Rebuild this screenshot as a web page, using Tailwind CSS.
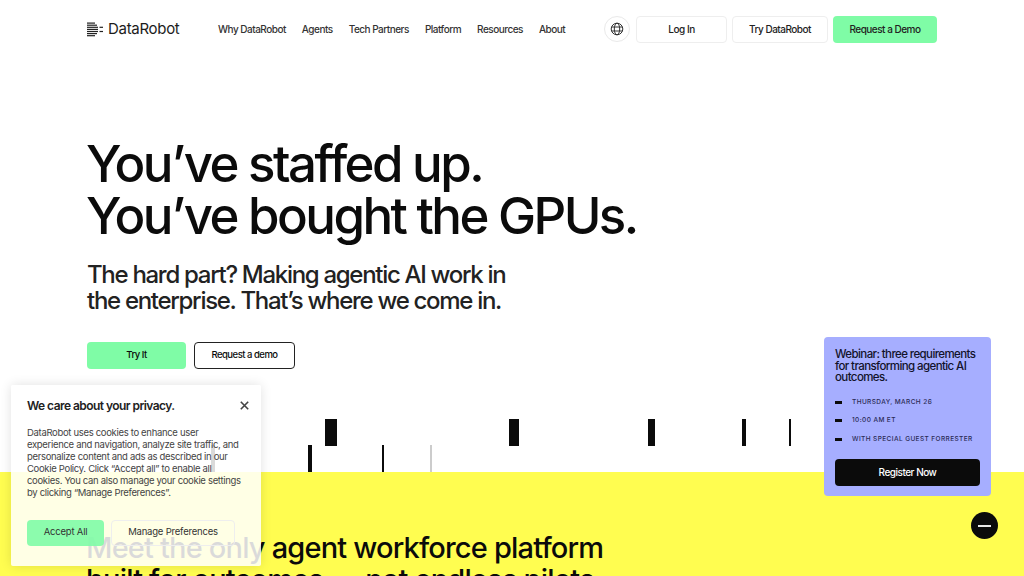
<!DOCTYPE html>
<html lang="en">
<head>
    <meta charset="UTF-8">
    <title>DataRobot</title>
    <script src="https://cdn.jsdelivr.net/npm/@tailwindcss/browser@4"></script>
</head>
<body class="bg-white text-[#0b0b0b] font-['Inter',sans-serif] h-[576px] w-[1024px] overflow-hidden relative">

    <!-- Header -->
    <header class="h-[58px] pl-[87px] flex items-center">
        <a class="flex items-center gap-[5px] w-[131px] shrink-0">
            <svg width="16" height="15" viewBox="0 0 16 15" fill="#222">
                <rect x="0" y="0.5" width="8" height="1.2"/>
                <rect x="0" y="2.6" width="10" height="1.2"/>
                <rect x="0" y="4.7" width="11" height="1.2"/>
                <rect x="0" y="6.8" width="11" height="1.2"/>
                <rect x="0" y="8.9" width="11" height="1.2"/>
                <rect x="0" y="11" width="10" height="1.2"/>
                <rect x="0" y="13.1" width="8" height="1.2"/>
                <rect x="12.5" y="4.7" width="3.5" height="1.2"/>
                <rect x="12.5" y="8.9" width="3.5" height="1.2"/>
            </svg>
            <span class="text-[15px] tracking-[-0.3px] text-[#1c1c1c]">DataRobot</span>
        </a>
        <nav class="flex items-center gap-4 text-[10px] font-medium tracking-[-0.5px] text-[#333] w-[386px] shrink-0">
            <a>Why DataRobot</a>
            <a>Agents</a>
            <a>Tech Partners</a>
            <a>Platform</a>
            <a>Resources</a>
            <a>About</a>
        </nav>
        <div class="flex items-center gap-[5px] text-[10px] font-medium tracking-[-0.5px] text-[#222]">
            <button class="w-[26px] h-[26px] mr-[1px] rounded-full border border-[#e9e9e9] flex items-center justify-center">
                <svg width="14" height="14" viewBox="0 0 14 14" fill="none" stroke="#333" stroke-width="1">
                    <circle cx="7" cy="7" r="5.8"/>
                    <ellipse cx="7" cy="7" rx="2.7" ry="5.8"/>
                    <path d="M1.6 5H12.4M1.6 9H12.4"/>
                </svg>
            </button>
            <button class="w-[91px] h-[27px] rounded-[4px] border border-[#eeeeee]">Log In</button>
            <button class="w-[96px] h-[27px] rounded-[4px] border border-[#eeeeee]">Try DataRobot</button>
            <button class="w-[104px] h-[27px] rounded-[4px] bg-[#7ffca6]">Request a Demo</button>
        </div>
    </header>

    <!-- Hero -->
    <section class="pl-[87px] pt-[80px] h-[414px]">
        <h1 class="text-[51px] leading-[52px] font-medium tracking-[-2.55px] -ml-[1px]">You’ve staffed up.<br>You’ve bought the GPUs.</h1>
        <p class="mt-[20px] text-[24px] leading-[26px] font-medium tracking-[-1.3px] text-[#222]">The hard part? Making agentic AI work in<br>the enterprise. That’s where we come in.</p>
        <div class="mt-[28px] flex gap-2 text-[9.5px] font-medium tracking-[-0.5px]">
            <button class="w-[99px] h-[27px] rounded-[4px] bg-[#7ffca6]">Try It</button>
            <button class="w-[101px] h-[27px] rounded-[4px] border border-[#222]">Request a demo</button>
        </div>
    </section>

    <!-- Yellow section -->
    <section class="bg-[#fffd50] h-[104px] pl-[87px] pt-[60px] overflow-hidden">
        <h2 class="text-[29px] leading-[32px] font-medium tracking-[-0.82px] -ml-[1px]">Meet the only agent workforce platform<br>built for outcomes — not endless pilots.</h2>
    </section>

    <!-- Barcode bars -->
    <div class="absolute left-[325px] top-[419px] w-[12px] h-[27px] bg-[#0b0b0b]"></div>
    <div class="absolute left-[509px] top-[419px] w-[10px] h-[27px] bg-[#0b0b0b]"></div>
    <div class="absolute left-[648px] top-[419px] w-[7px] h-[27px] bg-[#0b0b0b]"></div>
    <div class="absolute left-[742px] top-[419px] w-[4px] h-[27px] bg-[#0b0b0b]"></div>
    <div class="absolute left-[789px] top-[419px] w-[2px] h-[27px] bg-[#0b0b0b]"></div>
    <div class="absolute left-[308px] top-[445px] w-[4px] h-[27px] bg-[#0b0b0b]"></div>
    <div class="absolute left-[382px] top-[445px] w-[2px] h-[27px] bg-[#0b0b0b]"></div>
    <div class="absolute left-[430px] top-[445px] w-[2px] h-[27px] bg-[#cccccc]"></div>
    <div class="absolute left-[211px] top-[445px] w-[4px] h-[27px] bg-[#0b0b0b]"></div>

    <!-- Webinar card -->
    <aside class="absolute left-[824px] top-[337px] w-[167px] h-[159px] rounded-[4px] bg-[#a6aeff] px-[11px] pt-[12px]">
        <p class="text-[11.5px] leading-[11.5px] font-medium tracking-[-0.6px] text-[#12122a]">Webinar: three requirements for transforming agentic AI outcomes.</p>
        <ul class="mt-[14px] flex flex-col gap-[9.5px] text-[6.5px] leading-[9px] font-medium tracking-[0.4px] text-[#2a2a55]">
            <li class="flex items-center gap-[10px]"><span class="w-[7px] h-[3px] bg-[#0b0b0b]"></span>THURSDAY, MARCH 26</li>
            <li class="flex items-center gap-[10px]"><span class="w-[7px] h-[3px] bg-[#0b0b0b]"></span>10:00 AM ET</li>
            <li class="flex items-center gap-[10px]"><span class="w-[7px] h-[3px] bg-[#0b0b0b]"></span>WITH SPECIAL GUEST FORRESTER</li>
        </ul>
        <button class="mt-[15px] w-[145px] h-[27px] rounded-[4px] bg-[#0b0b0b] text-white text-[10px] font-medium tracking-[-0.5px]">Register Now</button>
    </aside>

    <!-- Minimise button -->
    <button class="absolute left-[971px] top-[512px] w-[27px] h-[27px] rounded-full bg-[#0b0b0b] flex items-center justify-center">
        <span class="w-[13px] h-[2px] bg-[#e8e8e8]"></span>
    </button>

    <!-- Cookie banner -->
    <div class="absolute left-[11px] top-[385px] w-[250px] h-[181px] rounded-[2px] bg-white/85 shadow-[0_0_12px_rgba(0,0,0,0.12)] px-[16px] pt-[13px]">
        <div class="flex items-center justify-between">
            <h3 class="text-[12px] font-semibold tracking-[-0.55px] leading-[15px] text-[#222]">We care about your privacy.</h3>
            <svg class="mr-[-4px]" width="9" height="9" viewBox="0 0 9 9" stroke="#444" stroke-width="1.6"><path d="M0.8 0.8L8.2 8.2M8.2 0.8L0.8 8.2"/></svg>
        </div>
        <p class="mt-[14px] text-[9.5px] leading-[12.1px] tracking-[-0.32px] text-[#444]">DataRobot uses cookies to enhance user<br>experience and navigation, analyze site traffic, and<br>personalize content and ads as described in our<br>Cookie Policy. Click “Accept all” to enable all<br>cookies. You can also manage your cookie settings<br>by clicking “Manage Preferences”.</p>
        <div class="mt-[20px] flex gap-[7px] text-[9.5px] tracking-[-0.2px] text-[#333]">
            <button class="w-[77px] h-[26px] rounded-[4px] bg-[#7ffca6]/90">Accept All</button>
            <button class="w-[124px] h-[26px] rounded-[4px] border border-[#eeeeee]">Manage Preferences</button>
        </div>
    </div>

</body>
</html>
